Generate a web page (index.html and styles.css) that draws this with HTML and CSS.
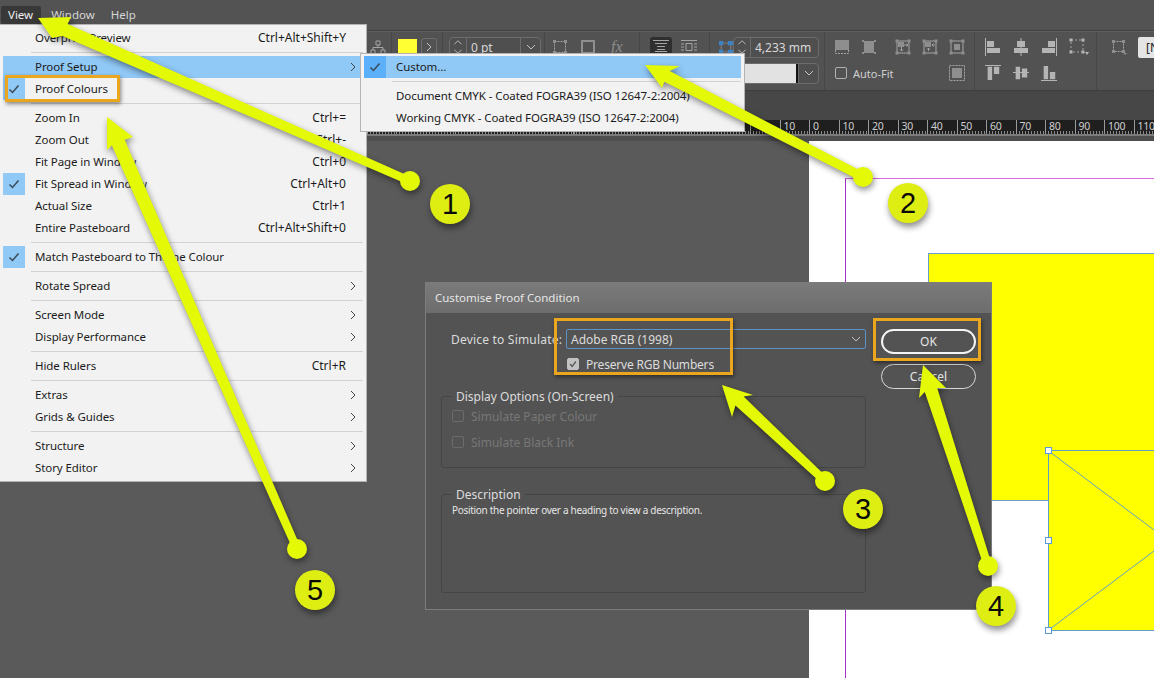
FILE: index.html
```html
<!DOCTYPE html>
<html lang="en">
<head>
    <meta charset="UTF-8">
    <title>Customise Proof Condition</title>
    <link rel="stylesheet" href="styles.css">
</head>
<body>
<div class="app">
    <!-- Menu bar -->
    <div class="menubar">
        <span class="menubar-item menubar-open">View</span>
        <span class="menubar-item">Window</span>
        <span class="menubar-item">Help</span>
    </div>

    <!-- Control panel -->
    <div class="toolbar">
        <div class="tool-group g-hier">
            <div class="tool-row">
                <svg class="ico" viewBox="0 0 16 16"><path d="M6 2h4v4H6zM1 11h4v4H1zM11 11h4v4h-4zM8 6v2.500M3 11V8.500h10V11"/></svg>
            </div>
        </div>
        <div class="tool-group g-fill">
            <div class="tool-row">
                <span class="swatch"></span>
                <span class="mini-btn"><svg class="chev" viewBox="0 0 10 10"><path d="M3 1l4 4-4 4"/></svg></span>
            </div>
        </div>
        <div class="tool-group g-stroke">
            <div class="tool-row">
                <div class="field field-stroke">
                    <span class="spin">
                        <svg class="chev" viewBox="0 0 10 10"><path d="M1 7l4-4 4 4"/></svg>
                        <svg class="chev" viewBox="0 0 10 10"><path d="M1 3l4 4 4-4"/></svg>
                    </span>
                    <span class="field-value">0 pt</span>
                    <span class="drop"><svg class="chev" viewBox="0 0 10 10"><path d="M1 3l4 4 4-4"/></svg></span>
                </div>
            </div>
        </div>
        <div class="tool-group g-fx">
            <div class="tool-row">
                <svg class="ico" viewBox="0 0 16 16"><path d="M2.500 2.500h11v11h-11z" stroke-dasharray="2 1"/><path class="solid" d="M1 1h3v3H1zM12 1h3v3h-3zM1 12h3v3H1zM12 12h3v3h-3z"/></svg>
                <svg class="ico ico-stroke" viewBox="0 0 16 16"><path d="M2 2h12v12H2z" stroke-width="2"/></svg>
                <span class="fx">fx</span>
            </div>
        </div>
        <div class="tool-group g-wrap">
            <div class="tool-row">
                <span class="wrap-on">
                    <svg class="ico" viewBox="0 0 16 16"><path d="M0 1.500h16M0 14.500h16M2 4.500h12M4 7.500h8M4 10.500h8M2 12.500h12"/></svg>
                </span>
                <svg class="ico" viewBox="0 0 16 16"><path d="M0 1.500h16M0 14.500h16M0 5h3M0 8h3M0 11h3M13 5h3M13 8h3M13 11h3M5 4.500h6v7H5z"/></svg>
            </div>
        </div>
        <div class="tool-group g-size">
            <div class="tool-row">
                <svg class="ico ico-blue" viewBox="0 0 16 16"><path class="blue" d="M0 1h5v5H0zM10 1h6v5h-6zM0 11h5v5H0zM10 11h6v5h-6z"/><path class="solid" d="M5 3h5v1H5zM5 13h5v1H5zM2 6h1v5H2zM13 6h1v5h-1z"/></svg>
                <div class="field field-size">
                    <span class="spin">
                        <svg class="chev" viewBox="0 0 10 10"><path d="M1 7l4-4 4 4"/></svg>
                        <svg class="chev" viewBox="0 0 10 10"><path d="M1 3l4 4 4-4"/></svg>
                    </span>
                    <span class="field-value">4,233 mm</span>
                </div>
            </div>
            <div class="tool-row">
                <div class="field field-style">
                    <span class="style-preview"></span>
                    <span class="drop"><svg class="chev" viewBox="0 0 10 10"><path d="M1 3l4 4 4-4"/></svg></span>
                </div>
            </div>
        </div>
        <div class="tool-group g-fit">
            <div class="tool-row fit-icons">
                <svg class="ico" viewBox="0 0 16 16"><path class="solid" d="M1 1h14v10H1z"/><path d="M1.500 11v3.500h13V11" stroke-dasharray="2 1"/></svg>
                <svg class="ico" viewBox="0 0 16 16"><path class="solid" d="M3 2h10v12H3z"/><path d="M1.500 1.500h1v1h-1zM13.500 1.500h1v1h-1zM1.500 13.500h1v1h-1zM13.500 13.500h1v1h-1z"/></svg>
                <span class="short-sep"></span>
                <svg class="ico" viewBox="0 0 16 16"><path d="M2 2h12v12H2z"/><path class="solid" d="M3 3h6v5H3zM0.500 0.500h3v3h-3zM12.500 0.500h3v3h-3zM0.500 12.500h3v3h-3zM12.500 12.500h3v3h-3z"/><path d="M6.500 8v4M5 10.500l1.500 1.500 1.500-1.500M9 6h4M11.500 4.500L13 6l-1.500 1.500"/></svg>
                <svg class="ico" viewBox="0 0 16 16"><path d="M2 2h12v12H2z"/><path class="solid" d="M3 3h6v5H3zM0.500 0.500h3v3h-3zM12.500 0.500h3v3h-3zM0.500 12.500h3v3h-3zM12.500 12.500h3v3h-3z"/><path d="M6.500 12V9M5 10.500L6.500 9 8 10.500M13 6h-3M11.500 4.500L10 6l1.500 1.500"/></svg>
                <svg class="ico" viewBox="0 0 16 16"><path d="M2 2h12v12H2z"/><path class="solid" d="M5 5h6v6H5zM0.500 0.500h3v3h-3zM12.500 0.500h3v3h-3zM0.500 12.500h3v3h-3zM12.500 12.500h3v3h-3z"/></svg>
            </div>
            <div class="tool-row">
                <span class="autofit-box"></span>
                <span class="autofit-label">Auto-Fit</span>
                <svg class="ico ico-end" viewBox="0 0 16 16"><path d="M0.500 0.500h15v15H0.500z" stroke-dasharray="2 1"/><path class="solid" d="M3 3h10v10H3z"/></svg>
            </div>
        </div>
        <div class="tool-group g-align">
            <div class="tool-row align-icons">
                <svg class="ico" viewBox="0 0 16 18"><path class="solid" d="M0 0h1v18H0zM2 3h7v6H2zM2 10h13v5H2z"/></svg>
                <svg class="ico" viewBox="0 0 16 18"><path class="solid" d="M7.500 0h1v18h-1zM4 3h8v6H4zM1 10h14v5H1z"/></svg>
                <svg class="ico" viewBox="0 0 16 18"><path class="solid" d="M15 0h1v18h-1zM7 3h7v6H7zM1 10h13v5H1z"/></svg>
                <svg class="ico ico-wide" viewBox="0 0 20 18"><path d="M2 2h12v12H2z" stroke-dasharray="2 2"/><path class="solid" d="M0.500 0.500h3v3h-3zM12.500 0.500h3v3h-3zM0.500 12.500h3v3h-3zM12.500 12.500h3v3h-3zM16 14h4l-2 3z"/></svg>
            </div>
            <div class="tool-row align-icons">
                <svg class="ico" viewBox="0 0 18 18"><path class="solid" d="M0 0h18v1H0zM3 2h5v15H3zM10 2h6v8h-6z"/></svg>
                <svg class="ico" viewBox="0 0 18 18"><path class="solid" d="M0 8h18v1H0zM3 2h5v14H3zM10 4h6v10h-6z"/></svg>
                <svg class="ico" viewBox="0 0 18 18"><path class="solid" d="M0 17h18v1H0zM3 1h5v15H3zM10 8h6v8h-6z"/></svg>
            </div>
        </div>
        <div class="tool-group g-last">
            <div class="tool-row">
                <svg class="ico" viewBox="0 0 16 16"><path d="M2.500 2.500h10v10h-10z" stroke-dasharray="2 1"/><path class="solid" d="M1 1h3v3H1zM11 1h3v3h-3zM1 11h3v3H1zM11 11h3v3h-3zM12.500 14h3.500l-1.750 2z"/></svg>
                <span class="style-input">[N</span>
            </div>
        </div>
    </div>

    <div class="tabstrip"></div>

    <!-- Ruler, the cells left of 20 sit under the open submenu -->
    <div class="ruler">
        <span class="ruler-cell"></span><span class="ruler-cell"></span><span class="ruler-cell"></span>
        <span class="ruler-cell"></span><span class="ruler-cell"></span><span class="ruler-cell"></span>
        <span class="ruler-cell"></span><span class="ruler-cell"></span><span class="ruler-cell"></span>
        <span class="ruler-cell"></span><span class="ruler-cell"></span><span class="ruler-cell"></span>
        <span class="ruler-cell"></span><span class="ruler-cell"></span><span class="ruler-cell">10</span>
        <span class="ruler-cell">0</span><span class="ruler-cell">10</span><span class="ruler-cell">20</span>
        <span class="ruler-cell">30</span><span class="ruler-cell">40</span><span class="ruler-cell">50</span>
        <span class="ruler-cell">60</span><span class="ruler-cell">70</span><span class="ruler-cell">80</span>
        <span class="ruler-cell">90</span><span class="ruler-cell">100</span><span class="ruler-cell">110</span>
    </div>
    <div class="ruler-edge"></div>

    <!-- Pasteboard and page -->
    <div class="pasteboard">
        <div class="page-sheet">
            <div class="page-margin"></div>
            <div class="yellow-block"></div>
            <div class="yellow-frame">
                <svg class="frame-x" viewBox="0 0 240 180"><path d="M0 0L240 180M0 180L240 0"/></svg>
                <span class="handle handle-top"></span>
                <span class="handle handle-mid"></span>
                <span class="handle handle-bottom"></span>
            </div>
        </div>
    </div>

    <!-- View menu -->
    <div class="menu">
        <div class="menu-row"><span class="check"></span><span class="menu-label">Overprint Preview</span><span class="shortcut">Ctrl+Alt+Shift+Y</span></div>
        <div class="menu-sep"></div>
        <div class="menu-row hot"><span class="check"></span><span class="menu-label">Proof Setup</span><svg class="chev more" viewBox="0 0 10 10"><path d="M3 1l4 4-4 4"/></svg></div>
        <div class="menu-row"><span class="check on"><svg viewBox="0 0 12 12"><path d="M1.500 6.500l3 3 6-7"/></svg></span><span class="menu-label">Proof Colours</span></div>
        <div class="menu-sep"></div>
        <div class="menu-row"><span class="check"></span><span class="menu-label">Zoom In</span><span class="shortcut">Ctrl+=</span></div>
        <div class="menu-row"><span class="check"></span><span class="menu-label">Zoom Out</span><span class="shortcut">Ctrl+-</span></div>
        <div class="menu-row"><span class="check"></span><span class="menu-label">Fit Page in Window</span><span class="shortcut">Ctrl+0</span></div>
        <div class="menu-row"><span class="check on"><svg viewBox="0 0 12 12"><path d="M1.500 6.500l3 3 6-7"/></svg></span><span class="menu-label">Fit Spread in Window</span><span class="shortcut">Ctrl+Alt+0</span></div>
        <div class="menu-row"><span class="check"></span><span class="menu-label">Actual Size</span><span class="shortcut">Ctrl+1</span></div>
        <div class="menu-row"><span class="check"></span><span class="menu-label">Entire Pasteboard</span><span class="shortcut">Ctrl+Alt+Shift+0</span></div>
        <div class="menu-sep"></div>
        <div class="menu-row"><span class="check on"><svg viewBox="0 0 12 12"><path d="M1.500 6.500l3 3 6-7"/></svg></span><span class="menu-label">Match Pasteboard to Theme Colour</span></div>
        <div class="menu-sep"></div>
        <div class="menu-row"><span class="check"></span><span class="menu-label">Rotate Spread</span><svg class="chev more" viewBox="0 0 10 10"><path d="M3 1l4 4-4 4"/></svg></div>
        <div class="menu-sep"></div>
        <div class="menu-row"><span class="check"></span><span class="menu-label">Screen Mode</span><svg class="chev more" viewBox="0 0 10 10"><path d="M3 1l4 4-4 4"/></svg></div>
        <div class="menu-row"><span class="check"></span><span class="menu-label">Display Performance</span><svg class="chev more" viewBox="0 0 10 10"><path d="M3 1l4 4-4 4"/></svg></div>
        <div class="menu-sep"></div>
        <div class="menu-row"><span class="check"></span><span class="menu-label">Hide Rulers</span><span class="shortcut">Ctrl+R</span></div>
        <div class="menu-sep"></div>
        <div class="menu-row"><span class="check"></span><span class="menu-label">Extras</span><svg class="chev more" viewBox="0 0 10 10"><path d="M3 1l4 4-4 4"/></svg></div>
        <div class="menu-row"><span class="check"></span><span class="menu-label">Grids &amp; Guides</span><svg class="chev more" viewBox="0 0 10 10"><path d="M3 1l4 4-4 4"/></svg></div>
        <div class="menu-sep"></div>
        <div class="menu-row"><span class="check"></span><span class="menu-label">Structure</span><svg class="chev more" viewBox="0 0 10 10"><path d="M3 1l4 4-4 4"/></svg></div>
        <div class="menu-row"><span class="check"></span><span class="menu-label">Story Editor</span><svg class="chev more" viewBox="0 0 10 10"><path d="M3 1l4 4-4 4"/></svg></div>
    </div>

    <!-- Proof Setup submenu -->
    <div class="submenu">
        <div class="menu-row hot"><span class="check strong"><svg viewBox="0 0 12 12"><path d="M1.500 6.500l3 3 6-7"/></svg></span><span class="menu-label">Custom...</span></div>
        <div class="menu-sep"></div>
        <div class="menu-row"><span class="check"></span><span class="menu-label">Document CMYK - Coated FOGRA39 (ISO 12647-2:2004)</span></div>
        <div class="menu-row"><span class="check"></span><span class="menu-label">Working CMYK - Coated FOGRA39 (ISO 12647-2:2004)</span></div>
    </div>

    <!-- Customise Proof Condition dialog -->
    <div class="dialog">
        <div class="dialog-title">Customise Proof Condition</div>
        <div class="dialog-body">
            <div class="dialog-main">
                <div class="device-row">
                    <span class="device-label">Device to Simulate:</span>
                    <div class="device-select">
                        <span>Adobe RGB (1998)</span>
                        <svg class="chev" viewBox="0 0 10 10"><path d="M1 3l4 4 4-4"/></svg>
                    </div>
                </div>
                <label class="preserve-row">
                    <span class="dlg-check ticked"><svg viewBox="0 0 12 12"><path d="M2.500 6l2.500 3 4.500-6"/></svg></span>
                    Preserve RGB Numbers
                </label>
                <fieldset class="group group-display">
                    <legend>Display Options (On-Screen)</legend>
                    <div class="option-row"><span class="dlg-check"></span>Simulate Paper Colour</div>
                    <div class="option-row"><span class="dlg-check"></span>Simulate Black Ink</div>
                </fieldset>
                <fieldset class="group group-desc">
                    <legend>Description</legend>
                    <p class="desc-text">Position the pointer over a heading to view a description.</p>
                </fieldset>
            </div>
            <div class="dialog-buttons">
                <button class="dlg-btn dlg-btn-default">OK</button>
                <button class="dlg-btn">Cancel</button>
            </div>
        </div>
    </div>

    <!-- Tutorial annotations -->
    <div class="callout callout-colours"></div>
    <div class="callout callout-device"></div>
    <div class="callout callout-ok"></div>

    <svg class="arrows" viewBox="0 0 1154 678">
        <polygon points="38,18 71,17 67.600,24 411.600,177.300 408.400,184.700 62.400,36 52,38"/>
        <circle cx="410" cy="181" r="10"/>
        <polygon points="645,65 680,66 669.700,71.100 865,173 861,181 664.300,81.700 662,88"/>
        <circle cx="863" cy="177" r="10"/>
        <polygon points="722,385 753,395 743.600,396.600 827.700,478.100 822.300,483.900 735.400,405.400 732,417"/>
        <circle cx="825" cy="481" r="10"/>
        <polygon points="923,365 946,388 937.200,388 991.800,564.800 984.200,567.200 924.800,392 919,398"/>
        <circle cx="988" cy="566" r="10"/>
        <polygon points="107,117 133,137 124.700,139.800 300.700,547.400 293.300,550.600 111.900,145.400 107,150"/>
        <circle cx="297" cy="549" r="10"/>
    </svg>

    <div class="badge badge-1">1</div>
    <div class="badge badge-2">2</div>
    <div class="badge badge-3">3</div>
    <div class="badge badge-4">4</div>
    <div class="badge badge-5">5</div>
</div>
</body>
</html>
```

FILE: styles.css
```css
/* General */
* {
    box-sizing: border-box;
}

html, body {
    margin: 0;
    height: 100%;
    overflow: hidden;
}

body {
    font-family: "Noto Sans", "Open Sans", sans-serif;
    font-size: 12px;
    background: #535353;
}

.app {
    position: relative;
    width: 1154px;
    height: 678px;
    display: flex;
    flex-direction: column;
    overflow: hidden;
}

/* Menu bar */
.menubar {
    height: 31px;
    display: flex;
    align-items: flex-start;
    padding: 6px 0 0 1px;
    background: #535353;
    border-bottom: 1px solid #424242;
    color: #d6d6d6;
    font-size: 11.5px;
}

.menubar-item {
    height: 18px;
    line-height: 17px;
    padding: 0 8px;
}

.menubar-open {
    padding-left: 7px;
    margin-right: 2px;
    background: #383838;
    border-radius: 2px;
    color: #eee;
}

/* Control panel */
.toolbar {
    height: 60px;
    display: flex;
    padding-left: 367px;
    background: #525252;
    border-bottom: 1px solid #3d3d3d;
    border-top: 1px solid #5f5f5f;
    color: #c8c8c8;
}

.tool-group {
    display: flex;
    flex-direction: column;
    gap: 4px;
    padding-top: 4px;
    height: 58px;
    border-right: 1px solid #474747;
    flex: none;
}

.tool-row {
    display: flex;
    align-items: center;
    height: 22px;
}

.g-hier { width: 25px; padding-left: 3px; }
.g-fill { width: 51px; padding-left: 6px; }
.g-stroke { width: 102px; padding-left: 6px; }
.g-fx { width: 95px; padding-left: 7px; }
.g-wrap { width: 70px; padding-left: 10px; }
.g-size { width: 115px; padding-left: 9px; }
.g-fit { width: 150px; padding: 4px 9px 0; }
.g-align { width: 122px; padding-left: 10px; }
.g-last { width: 60px; padding-left: 14px; border-right: none; }

.ico {
    width: 16px;
    height: 16px;
    flex: none;
    fill: none;
    stroke: #a4a4a4;
    stroke-width: 1;
}

.ico .solid {
    fill: #8e8e8e;
    stroke: none;
}

.ico .blue {
    fill: #3d83c4;
    stroke: none;
}

.ico-blue {
    width: 14px;
}

.ico-stroke {
    stroke: #8e8e8e;
}

.ico-wide {
    width: 20px;
}

.ico-end {
    margin-left: auto;
}

.chev {
    width: 10px;
    height: 10px;
    flex: none;
    fill: none;
    stroke: #c4c4c4;
    stroke-width: 1;
}

.swatch {
    width: 19px;
    height: 17px;
    background: #ffff33;
}

.mini-btn {
    width: 16px;
    height: 18px;
    margin-left: 4px;
    border: 1px solid #6e6e6e;
    border-radius: 3px;
    display: flex;
    align-items: center;
    justify-content: center;
}

.field {
    display: flex;
    align-items: stretch;
    height: 21px;
    border: 1px solid #6c6c6c;
    border-radius: 4px;
    background: #4f4f4f;
}

.spin {
    width: 17px;
    border-right: 1px solid #6c6c6c;
    display: flex;
    flex-direction: column;
    align-items: center;
    justify-content: center;
    flex: none;
}

.spin .chev {
    height: 9px;
}

.field-value {
    flex: 1;
    line-height: 20px;
    padding-left: 4px;
    color: #d8d8d8;
}

.drop {
    width: 20px;
    border-left: 1px solid #6c6c6c;
    display: flex;
    align-items: center;
    justify-content: center;
    flex: none;
}

.field-stroke { width: 92px; }
.field-size { width: 86px; }

.field-style {
    width: 86px;
    margin-left: 14px;
    overflow: hidden;
}

.style-preview {
    flex: 1;
    background: #e2e2e2;
    border-right: 2px solid #111;
    box-shadow: inset -3px 0 0 #e2e2e2;
}

.fx {
    margin-left: 15px;
    font-family: "Liberation Serif", serif;
    font-style: italic;
    font-size: 16px;
    color: #8e8e8e;
}

.g-fx .ico + .ico {
    margin-left: 12px;
}

.wrap-on {
    width: 22px;
    height: 20px;
    margin-right: 9px;
    background: #2f2f2f;
    border-radius: 3px;
    display: flex;
    align-items: center;
    justify-content: center;
}

.fit-icons {
    gap: 11px;
}

.short-sep {
    width: 1px;
    height: 22px;
    margin: 0 -2px;
    background: #474747;
}

.autofit-box {
    width: 12px;
    height: 12px;
    margin-left: 1px;
    border: 1px solid #b0b0b0;
    border-radius: 2px;
}

.autofit-label {
    margin-left: 6px;
    font-size: 11px;
    color: #cfcfcf;
}

.align-icons {
    gap: 12px;
}

.align-icons .ico {
    height: 18px;
}

.align-icons .ico .solid {
    fill: #b4b4b4;
}

.style-input {
    width: 40px;
    height: 21px;
    margin-left: 11px;
    padding-left: 8px;
    line-height: 21px;
    background: #e4e4e4;
    color: #222;
    border-radius: 2px;
    flex: none;
}

.tabstrip {
    height: 29px;
    background: #474747;
}

/* Ruler */
.ruler {
    height: 14px;
    display: flex;
    padding-left: 366.5px;
    color: #cfcfcf;
    background: #1f1f1f repeating-linear-gradient(90deg, #8a8a8a 0, #8a8a8a 1px, transparent 1px, transparent 2.95px) 366.5px 11px / 100% 3px no-repeat;
}

.ruler-cell {
    width: 29.5px;
    flex: none;
    padding-left: 3px;
    font-size: 10.5px;
    line-height: 13px;
    letter-spacing: -0.2px;
    border-left: 1px solid #9a9a9a;
}

.ruler-edge {
    height: 7px;
    background: #4e4e4e;
    border-top: 2px solid #7b7b7b;
}

/* Pasteboard */
.pasteboard {
    flex: 1;
    position: relative;
    background: #5a5a5a;
}

.page-sheet {
    position: absolute;
    left: 809px;
    top: 0;
    right: 0;
    bottom: 0;
    background: #fff;
}

.page-margin {
    position: absolute;
    left: 36px;
    top: 37px;
    right: 0;
    bottom: 0;
    border-top: 1px solid #d66ae0;
    border-left: 1px solid #a030c8;
}

.yellow-block {
    position: absolute;
    left: 119px;
    top: 112px;
    right: 0;
    height: 248px;
    background: #ffff00;
    border: 1px solid #6aa0c8;
    border-right: none;
}

.yellow-frame {
    position: absolute;
    left: 239px;
    top: 309px;
    width: 240px;
    height: 181px;
    background: #ffff00;
    border: 1px solid #5f9fc6;
}

.frame-x {
    display: block;
    width: 100%;
    height: 100%;
    fill: none;
    stroke: #5f9fc6;
    stroke-width: 1;
}

.handle {
    position: absolute;
    left: -4px;
    width: 7px;
    height: 7px;
    background: #fff;
    border: 1px solid #5b9bd5;
}

.handle-top { top: -4px; }
.handle-mid { top: 86px; }
.handle-bottom { bottom: -4px; }

/* Menus */
.menu, .submenu {
    position: absolute;
    background: #f2f2f2;
    color: #1b1b1b;
    padding: 2px 3px;
    border: 1px solid #b4b4b4;
}

.menu {
    left: -1px;
    top: 24px;
    width: 368px;
    height: 458px;
}

.submenu {
    left: 360px;
    top: 53px;
    width: 385px;
    height: 79px;
}

.menu-row {
    height: 22px;
    display: flex;
    align-items: center;
    padding-right: 6px;
}

.menu-row.hot {
    background: #90c8f6;
}

.check {
    width: 22px;
    height: 22px;
    flex: none;
    display: flex;
    align-items: center;
    justify-content: center;
}

.check svg {
    width: 12px;
    height: 12px;
    fill: none;
    stroke: #3a4a58;
    stroke-width: 1.5;
}

.check.on {
    background: #90c8f6;
}

.check.strong {
    background: #5cb0fa;
}

.menu-label {
    margin-left: 10px;
    padding-bottom: 1px;
    flex: 1;
    white-space: nowrap;
    font-size: 11.5px;
    letter-spacing: -0.08px;
}

.shortcut {
    margin-right: 11px;
    padding-bottom: 1px;
    white-space: nowrap;
}

.chev.more {
    stroke: #444;
    width: 10px;
    height: 10px;
    margin-right: -1px;
}

.menu-sep {
    height: 7px;
    margin-left: 28px;
    background: linear-gradient(#d2d2d2, #d2d2d2) 0 3px / 100% 1px no-repeat;
}

/* Dialog */
.dialog {
    position: absolute;
    left: 425px;
    top: 282px;
    width: 567px;
    height: 328px;
    background: #535353;
    border: 1px solid #7c7c7c;
    color: #dcdcdc;
    display: flex;
    flex-direction: column;
}

.dialog-title {
    height: 30px;
    flex: none;
    padding-left: 9px;
    line-height: 30px;
    font-size: 11.5px;
    background: linear-gradient(#7a7a7a, #6d6d6d);
    color: #e6e6e6;
}

.dialog-body {
    display: flex;
    padding: 16px 15px 0;
    gap: 15px;
}

.dialog-main {
    width: 425px;
}

.device-row {
    display: flex;
    align-items: center;
    padding-left: 10px;
    height: 20px;
}

.device-label {
    width: 115px;
    white-space: nowrap;
    letter-spacing: 0.2px;
}

.device-select {
    flex: 1;
    height: 20px;
    padding: 0 4px;
    display: flex;
    align-items: center;
    justify-content: space-between;
    border: 1px solid #5d92c6;
    border-radius: 2px;
}

.preserve-row {
    display: flex;
    align-items: center;
    gap: 7px;
    height: 14px;
    margin: 8px 0 0 126px;
    letter-spacing: -0.2px;
}

.dlg-check {
    width: 12px;
    height: 12px;
    flex: none;
    border: 1px solid #6c6c6c;
    border-radius: 2px;
    margin-right: 7px;
}

.preserve-row .dlg-check {
    margin-right: 0;
}

.dlg-check.ticked {
    background: #c2c2c2;
    border-color: #c2c2c2;
}

.dlg-check svg {
    display: block;
    fill: none;
    stroke: #5a5a5a;
    stroke-width: 1.6;
}

.group {
    margin: 0;
    padding: 0 10px;
    border: 1px solid #454545;
    border-radius: 3px;
    min-width: 0;
}

.group legend {
    position: relative;
    top: 1px;
    padding: 0 4px;
    line-height: 16px;
}

.group-display {
    height: 80px;
    margin-top: 17px;
    color: #777;
}

.group-display legend {
    color: #dcdcdc;
}

.option-row {
    display: flex;
    align-items: center;
    height: 26px;
    position: relative;
    top: -1px;
}

.group-desc {
    height: 107px;
    margin-top: 18px;
}

.desc-text {
    margin: 1px 0 0;
    font-size: 10px;
    line-height: 14px;
    letter-spacing: -0.3px;
    color: #e6e6e6;
}

.dialog-buttons {
    width: 95px;
    display: flex;
    flex-direction: column;
    gap: 10px;
}

.dlg-btn {
    height: 25px;
    border: 1px solid #d8d8d8;
    border-radius: 13px;
    background: transparent;
    color: #e6e6e6;
    font-family: inherit;
    font-size: 12px;
    padding: 0;
}

.dlg-btn-default {
    border: 2px solid #f4f4f4;
}

/* Annotations */
.callout {
    position: absolute;
    border: 3px solid #eba61f;
    box-shadow: 1px 2px 4px rgba(0, 0, 0, 0.45);
}

.callout-colours { left: 5px; top: 75px; width: 115px; height: 27px; }
.callout-device { left: 554px; top: 318px; width: 179px; height: 57px; }
.callout-ok { left: 873px; top: 318px; width: 108px; height: 43px; }

.arrows {
    position: absolute;
    left: 0;
    top: 0;
    width: 1154px;
    height: 678px;
    fill: #e4f905;
    filter: drop-shadow(1px 3px 3px rgba(0, 0, 0, 0.45));
}

.badge {
    position: absolute;
    width: 40px;
    height: 40px;
    border-radius: 50%;
    display: flex;
    align-items: center;
    justify-content: center;
    background: #dfee12;
    color: #0a0a0a;
    font-family: "Liberation Sans", Arial, sans-serif;
    font-size: 29px;
    box-shadow: 1px 4px 6px rgba(0, 0, 0, 0.45);
}

.badge-1 { left: 430px; top: 184px; }
.badge-2 { left: 888px; top: 183px; }
.badge-3 { left: 843px; top: 489px; }
.badge-4 { left: 976px; top: 586px; }
.badge-5 { left: 295px; top: 570px; }
```
